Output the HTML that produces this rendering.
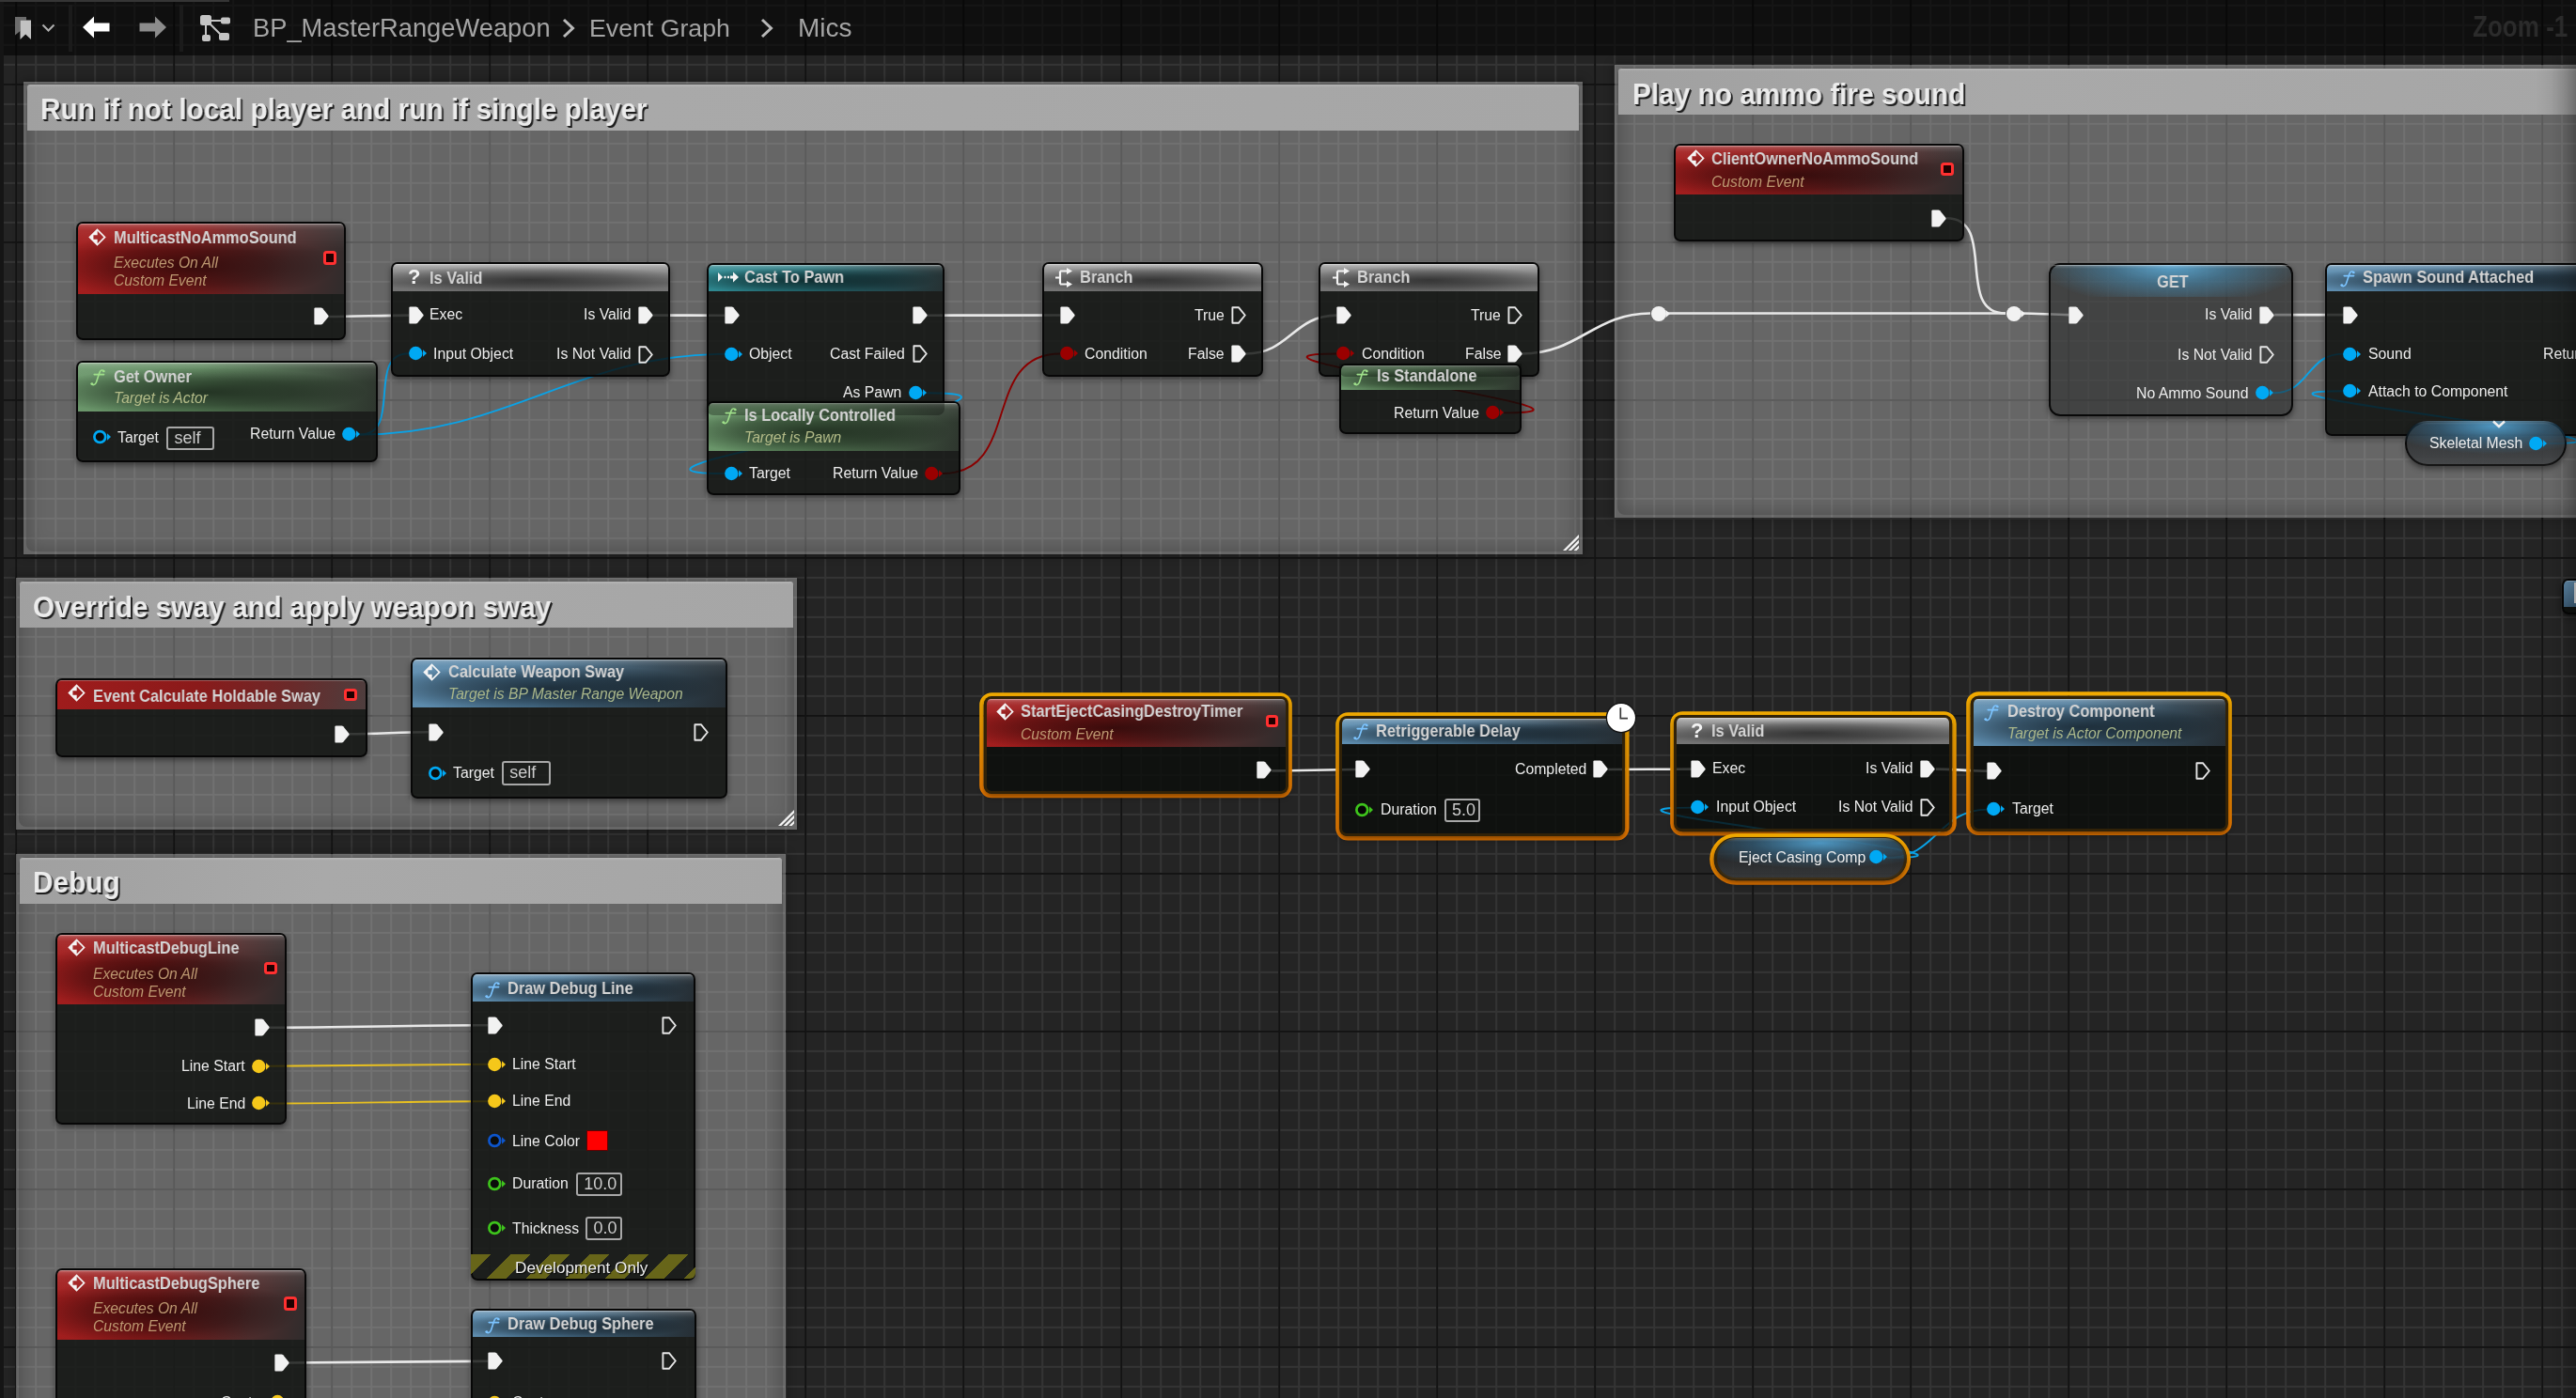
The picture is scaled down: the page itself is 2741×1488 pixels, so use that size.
<!DOCTYPE html>
<html><head><meta charset="utf-8"><title>BP_MasterRangeWeapon - Event Graph</title>
<style>
*{margin:0;padding:0;box-sizing:border-box}
html,body{width:2741px;height:1488px;overflow:hidden;position:relative}
body{font-family:"Liberation Sans",sans-serif;}

body{background-color:#242424;
background-image:
 linear-gradient(to right, #131313 0px, #131313 2px, transparent 2px),
 linear-gradient(to bottom, #131313 0px, #131313 2px, transparent 2px),
 linear-gradient(to right, #343434 0px, #343434 2px, transparent 2px),
 linear-gradient(to bottom, #343434 0px, #343434 2px, transparent 2px);
background-size: 168px 100%, 100% 168px, 21px 100%, 100% 21px;
background-position: 16.2px 0, 0 88.9px, 16.2px 0, 0 4.9px;
}

#tb{position:absolute;left:0;top:0;width:2741px;height:59px;background:rgba(0,0,0,0.58);z-index:50}
#tbline{position:absolute;left:0;top:0;width:244px;height:1.5px;background:#353535;z-index:56}
#rvig{position:absolute;right:0;top:59px;width:26px;height:1429px;background:linear-gradient(to left, rgba(0,0,0,0.2) 0px, rgba(0,0,0,0.08) 12px, rgba(0,0,0,0) 26px);z-index:48}
#lstrip{position:absolute;left:0;top:2px;width:3.5px;height:1486px;background:#151515;z-index:55}
.sep{position:absolute;top:5px;width:3.5px;height:50px;background:#1b1b1b;z-index:52}
.ico,.pin{position:absolute;display:block}
#tbwrap .ico{z-index:52}
.t{position:absolute;white-space:nowrap;line-height:1;will-change:transform}
#tbwrap .t,#tbwrap .ico,#tbwrap .sep{z-index:60}
.b{font-weight:bold}
.node .b{letter-spacing:0px}
.i{font-style:italic}
.bc{color:#a4a4a4;z-index:52}
.cmt{position:absolute;background:rgba(255,255,255,0.30);box-shadow:0 0 9px 2px rgba(0,0,0,0.28)}
.cin{position:absolute;left:3px;top:3px;right:3px;bottom:3px;border-radius:8px;box-shadow:inset 0 0 18px 3px rgba(0,0,0,0.22)}
.chdr{position:absolute;background:linear-gradient(180deg, rgba(255,255,255,0.18) 0px, rgba(255,255,255,0) 3px),linear-gradient(100deg,#a0a0a0 0%,#a9a9a9 40%,#a6a6a6 100%);border-radius:3px 3px 0 0}
.ctitle{color:#ececec;text-shadow:2px 2px 0 #1e1e1e, 1px 1px 0 #1e1e1e}
.wires{position:absolute;left:0;top:0}
.node{position:absolute;border:2px solid rgba(6,6,6,0.95);box-shadow:0 3px 6px rgba(0,0,0,0.45)}
.kids{position:absolute;left:-2px;top:-2px;right:-2px;bottom:-2px}
.hdr{position:absolute;left:0;top:0;right:0}
.hl{position:absolute;left:1px;top:0;right:1px;height:3px;border-top:1.5px solid rgba(255,255,255,0.28)}
.sel{position:absolute;overflow:visible}
.fico{font-family:"Liberation Serif",serif;font-style:italic;font-size:24px;line-height:1}
.qico{font-weight:bold;font-size:22px;color:#f4f4f4;line-height:1}
.vbox{position:absolute;border:2px solid #a8a8a8;color:#cccccc;overflow:hidden;padding-left:6px;white-space:nowrap;border-radius:3px;box-sizing:content-box}
.dsq{position:absolute;border:3px solid #ff3030;background:#200000;border-radius:3.5px;box-sizing:content-box}
.swatch{position:absolute;width:23px;height:22px;background:#ff0000;border:1px solid #600}
.dev{position:absolute;left:0;right:0;background:repeating-linear-gradient(135deg,#676519 0px,#676519 14.85px,rgba(0,0,0,0) 14.85px,rgba(0,0,0,0) 29.7px);border-radius:0 0 6px 6px}
.varhdr{position:absolute;left:0;top:0;right:0;bottom:0;background:linear-gradient(180deg, rgba(255,255,255,0.2) 0px, rgba(255,255,255,0) 4px),radial-gradient(ellipse 68% 62% at 55% 12%, rgba(85,170,220,0.85) 0%, rgba(60,130,175,0.45) 50%, rgba(0,0,0,0) 100%),linear-gradient(180deg, rgba(0,0,0,0.15) 0%, rgba(0,0,0,0.05) 50%, rgba(255,255,255,0.06) 100%)}
</style></head><body>
<div class="cmt" style="left:24.9px;top:86.5px;width:1659.1px;height:503.3px"><div class="cin"></div></div><div class="chdr" style="left:29px;top:89.9px;width:1651px;height:48.9px"></div><span class="t b ctitle" style="top:101.18px;font-size:31.8px;left:43px;transform:scaleX(0.937);transform-origin:0 0;">Run if not local player and run if single player</span><svg class="ico" style="left:1663px;top:569.1px" width="17" height="17" viewBox="0 0 17 17"><path d="M0,17 L17,0 L17,3.2 L3.2,17 Z M5.6,17 L17,5.6 L17,9 L9,17 Z M11.4,17 L17,11.4 L17,14.6 L14.6,17 Z" fill="#f4f4f4"/></svg><div class="cmt" style="left:1718px;top:69.1px;width:1034px;height:481.7px"><div class="cin"></div></div><div class="chdr" style="left:1722px;top:73.1px;width:1026px;height:48.6px"><div style="position:absolute;left:0;top:0;right:0;bottom:0;background:linear-gradient(to left, rgba(0,0,0,0.2) 0px, rgba(0,0,0,0.08) 25px, rgba(0,0,0,0) 50px)"></div></div><span class="t b ctitle" style="top:84.78px;font-size:31.8px;left:1736.8px;transform:scaleX(0.937);transform-origin:0 0;">Play no ammo fire sound</span><div class="cmt" style="left:16.7px;top:615.2px;width:831.3px;height:268.1px"><div class="cin"></div></div><div class="chdr" style="left:21px;top:619.3px;width:822.7px;height:48.5px"></div><span class="t b ctitle" style="top:630.58px;font-size:31.8px;left:35px;transform:scaleX(0.937);transform-origin:0 0;">Override sway and apply weapon sway</span><svg class="ico" style="left:827.5px;top:862px" width="17" height="17" viewBox="0 0 17 17"><path d="M0,17 L17,0 L17,3.2 L3.2,17 Z M5.6,17 L17,5.6 L17,9 L9,17 Z M11.4,17 L17,11.4 L17,14.6 L14.6,17 Z" fill="#f4f4f4"/></svg><div class="cmt" style="left:16.7px;top:909px;width:819px;height:691px"><div class="cin"></div></div><div class="chdr" style="left:21px;top:912.7px;width:811px;height:49.1px"></div><span class="t b ctitle" style="top:924.18px;font-size:31.8px;left:35px;transform:scaleX(0.937);transform-origin:0 0;">Debug</span>
<svg class="wires" width="2741" height="1488"><defs><linearGradient id="selg" x1="0" y1="0" x2="0" y2="1"><stop offset="0" stop-color="#f5ad00"/><stop offset="1" stop-color="#e97800"/></linearGradient></defs><path d="M350.2,337 C378.93,337 406.27,335.6 435,335.6" stroke="#e8e8e8" stroke-width="2.6" fill="none"/><path d="M382.9,462.5 C429.03,462.5 388.87,376.2 435,376.2" stroke="#0aa2e6" stroke-width="1.9" fill="none"/><path d="M382.9,462.5 C540.83,462.5 613.07,376.8 771,376.8" stroke="#0aa2e6" stroke-width="1.9" fill="none"/><path d="M695.2,335.6 C720.5,335.6 745.7,335.7 771,335.7" stroke="#e8e8e8" stroke-width="2.6" fill="none"/><path d="M986.9,335.7 C1034,335.7 1080.9,335.5 1128,335.5" stroke="#e8e8e8" stroke-width="2.6" fill="none"/><path d="M986.3,418.2 C1171.35,418.2 585.95,504 771,504" stroke="#0aa2e6" stroke-width="1.9" fill="none"/><path d="M1003,504 C1087.17,504 1043.83,376.5 1128,376.5" stroke="#8a0000" stroke-width="1.9" fill="none"/><path d="M1326,376.5 C1371.7,376.5 1376.5,335.6 1422.2,335.6" stroke="#e8e8e8" stroke-width="2.6" fill="none"/><path d="M1600.2,439.4 C1757.82,439.4 1264.58,376.5 1422.2,376.5" stroke="#8a0000" stroke-width="1.9" fill="none"/><path d="M1619.8,376.5 C1679.53,376.5 1696.27,333.5 1756,333.5" stroke="#e8e8e8" stroke-width="2.6" fill="none"/><path d="M1773,333.5 C1893.33,333.5 2013.67,333.5 2134,333.5" stroke="#e8e8e8" stroke-width="2.6" fill="none"/><path d="M2071.1,232.2 C2125.83,232.2 2079.27,333.5 2134,333.5" stroke="#e8e8e8" stroke-width="2.6" fill="none"/><path d="M2151,333.5 C2168.3,333.5 2184,335.1 2201.3,335.1" stroke="#e8e8e8" stroke-width="2.6" fill="none"/><path d="M2420.2,335.1 C2444.57,335.1 2468.93,335.1 2493.3,335.1" stroke="#e8e8e8" stroke-width="2.6" fill="none"/><path d="M2419.2,418.3 C2457.7,418.3 2454.5,376.6 2493,376.6" stroke="#0aa2e6" stroke-width="1.9" fill="none"/><path d="M2710.1,472 C2879.34,472 2323.76,416.3 2493,416.3" stroke="#0aa2e6" stroke-width="1.9" fill="none"/><path d="M371.6,781.3 C400.33,781.3 427.07,779.3 455.8,779.3" stroke="#e8e8e8" stroke-width="2.6" fill="none"/><path d="M287.1,1093.7 C365.27,1093.7 441.03,1091.3 519.2,1091.3" stroke="#e8e8e8" stroke-width="2.6" fill="none"/><path d="M287.1,1134.8 C365.13,1134.8 441.17,1132.8 519.2,1132.8" stroke="#e8c020" stroke-width="1.9" fill="none"/><path d="M287.1,1174.5 C365.23,1174.5 441.07,1172.2 519.2,1172.2" stroke="#e8c020" stroke-width="1.9" fill="none"/><path d="M308.1,1450.5 C379.03,1450.5 448.27,1448.8 519.2,1448.8" stroke="#e8e8e8" stroke-width="2.6" fill="none"/><path d="M1353.2,820.4 C1383.53,820.4 1412.47,819 1442.8,819" stroke="#e8e8e8" stroke-width="2.6" fill="none"/><path d="M1711.3,819 C1740.93,819 1770.17,818.6 1799.8,818.6" stroke="#e8e8e8" stroke-width="2.6" fill="none"/><path d="M2060,818.6 C2078.93,818.6 2095.87,820.6 2114.8,820.6" stroke="#e8e8e8" stroke-width="2.6" fill="none"/><path d="M2008.1,913 C2176.13,913 1631.96,859.6 1800,859.6" stroke="#0aa2e6" stroke-width="1.9" fill="none"/><path d="M2008.1,913 C2060.8,913 2062.1,861.6 2114.8,861.6" stroke="#0aa2e6" stroke-width="1.9" fill="none"/><path d="M307,1492.5 C377.73,1492.5 448.47,1492.5 519.2,1492.5" stroke="#e8c020" stroke-width="1.9" fill="none"/></svg>
<div class="node" style="left:80.6px;top:236.2px;width:287.9px;height:126.3px;border-radius:7px;background:rgba(10,13,10,0.80);border-width:2px;"><div class="hdr" style="height:74.6px;background:linear-gradient(180deg, rgba(255,255,255,0.28) 0px, rgba(255,255,255,0.08) 3px, rgba(255,255,255,0) 7px),linear-gradient(180deg, rgba(255,255,255,0.10) 0%, rgba(255,255,255,0) 40%),radial-gradient(ellipse 55% 50% at 42% 60%, rgba(0,0,0,0.6) 0%, rgba(0,0,0,0.35) 55%, rgba(0,0,0,0) 100%),linear-gradient(100deg, #a41e1e 0%, #901c1c 40%, #4e2c2c 78%, #302c2c 100%);border-radius:5px 5px 0 0"></div><div class="hl" style="border-radius:6px 6px 0 0"></div><div class="kids" style="left:-2px;top:-2px;right:auto;bottom:auto;width:287.9px;height:126.3px"><svg class="ico" style="left:13.2px;top:6.8px" width="19" height="19" viewBox="0 0 20 20"><path d="M10,0.3 L19.7,10 L10,19.7 L0.3,10 Z M10.2,3 L17.2,10 L10.2,17 L10.2,12.3 L5.7,12.3 L5.7,7.7 L10.2,7.7 Z" fill="#f4f4f4" fill-rule="evenodd" /></svg><span class="t b" style="top:7.39px;font-size:18.2px;color:#d4d4d4;left:40px;transform:scaleX(0.9);transform-origin:0 0;">MulticastNoAmmoSound</span><span class="t i" style="top:36.31px;font-size:15.7px;color:#bc9770;left:40px;">Executes On All</span><span class="t i" style="top:55.31px;font-size:15.7px;color:#bc9770;left:40px;">Custom Event</span><div class="dsq" style="left:263.4px;top:31.3px;width:8.2px;height:8.2px"></div><svg class="pin" style="left:253.6px;top:91.3px" width="16" height="19" viewBox="0 0 16 19"><path d="M1.6,0.4 L7.6,0.4 Q8.6,0.4 9.3,1.2 L15.4,8.7 Q16,9.5 15.4,10.3 L9.3,17.8 Q8.6,18.6 7.6,18.6 L1.6,18.6 Q0.4,18.6 0.4,17.4 L0.4,1.6 Q0.4,0.4 1.6,0.4 Z" fill="#f2f2f2"/></svg></div></div><div class="node" style="left:80.6px;top:384.3px;width:321.1px;height:108.2px;border-radius:7px;background:rgba(10,13,10,0.80);border-width:2px;"><div class="hdr" style="height:51.7px;background:linear-gradient(180deg, rgba(255,255,255,0.28) 0px, rgba(255,255,255,0.08) 3px, rgba(255,255,255,0) 7px),linear-gradient(180deg, rgba(255,255,255,0.10) 0%, rgba(255,255,255,0) 40%),radial-gradient(ellipse 55% 50% at 42% 60%, rgba(0,0,0,0.6) 0%, rgba(0,0,0,0.35) 55%, rgba(0,0,0,0) 100%),linear-gradient(100deg, #6c986c 0%, #5c865c 40%, #3e523e 78%, #2e362e 100%);border-radius:5px 5px 0 0"></div><div class="hl" style="border-radius:6px 6px 0 0"></div><div class="kids" style="left:-2px;top:-2px;right:auto;bottom:auto;width:321.1px;height:108.2px"><svg class="ico" style="left:15.6px;top:9px" width="16" height="18" viewBox="0 0 16 18"><path d="M14.6,2.2 C14,0.6 11.4,0.4 10.2,2.8 C9.2,5 7.4,11.5 6.3,14.2 C5.3,16.8 2.6,17.4 1.4,15.6 M4.2,5.6 H14.6" stroke="#9fe08a" stroke-width="1.6" fill="none" stroke-linecap="round"/><circle cx="14.3" cy="2" r="1.3" fill="#9fe08a"/><circle cx="1.8" cy="15.6" r="1.4" fill="#9fe08a"/></svg><span class="t b" style="top:7.39px;font-size:18.2px;color:#d4d4d4;left:40px;transform:scaleX(0.9);transform-origin:0 0;">Get Owner</span><span class="t i" style="top:32.01px;font-size:15.7px;color:#b3bb88;left:40px;">Target is Actor</span><svg class="pin" style="left:18.3px;top:72.2px" width="20" height="18" viewBox="0 0 20 18"><circle cx="7.3" cy="9" r="5.9" fill="rgba(0,0,0,0.6)" stroke="#00a9f4" stroke-width="2.7"/><path d="M15,5.2 L19,9 L15,12.8 Z" fill="#00a9f4"/></svg><span class="t " style="top:73.53px;font-size:15.8px;color:#ececec;left:44.8px;">Target</span><div class="vbox" style="left:96.8px;top:69.3px;width:41px;height:21px;font-size:18px;line-height:21px">self</div><span class="t " style="top:70.13px;font-size:15.8px;color:#ececec;right:44.7px;">Return Value</span><svg class="pin" style="left:283.3px;top:69.2px" width="20" height="18" viewBox="0 0 20 18"><circle cx="7.3" cy="9" r="7.2" fill="#00a9f4"/><path d="M15,5.2 L19,9 L15,12.8 Z" fill="#00a9f4"/></svg></div></div><div class="node" style="left:416.1px;top:279.1px;width:296.7px;height:122.1px;border-radius:7px;background:rgba(10,13,10,0.80);border-width:2px;"><div class="hdr" style="height:28.8px;background:linear-gradient(180deg, rgba(255,255,255,0.35) 0px, rgba(255,255,255,0.1) 3px, rgba(255,255,255,0) 7px),radial-gradient(ellipse 62% 50% at 50% 58%, rgba(0,0,0,0.55) 0%, rgba(0,0,0,0.3) 55%, rgba(0,0,0,0) 100%),linear-gradient(180deg, #a4a4a4 0%, #8a8a8a 35%, #6e6e6e 70%, #747474 100%);border-radius:5px 5px 0 0"></div><div class="hl" style="border-radius:6px 6px 0 0"></div><div class="kids" style="left:-2px;top:-2px;right:auto;bottom:auto;width:296.7px;height:122.1px"><span class="t qico" style="left:17.6px;top:4.9px">?</span><span class="t b" style="top:7.49px;font-size:18.2px;color:#d4d4d4;left:40.7px;transform:scaleX(0.9);transform-origin:0 0;">Is Valid</span><svg class="pin" style="left:18.9px;top:47px" width="16" height="19" viewBox="0 0 16 19"><path d="M1.6,0.4 L7.6,0.4 Q8.6,0.4 9.3,1.2 L15.4,8.7 Q16,9.5 15.4,10.3 L9.3,17.8 Q8.6,18.6 7.6,18.6 L1.6,18.6 Q0.4,18.6 0.4,17.4 L0.4,1.6 Q0.4,0.4 1.6,0.4 Z" fill="#f2f2f2"/></svg><span class="t " style="top:48.03px;font-size:15.8px;color:#ececec;left:41.3px;">Exec</span><span class="t " style="top:48.33px;font-size:15.8px;color:#ececec;right:41.5px;">Is Valid</span><svg class="pin" style="left:263.1px;top:47px" width="16" height="19" viewBox="0 0 16 19"><path d="M1.6,0.4 L7.6,0.4 Q8.6,0.4 9.3,1.2 L15.4,8.7 Q16,9.5 15.4,10.3 L9.3,17.8 Q8.6,18.6 7.6,18.6 L1.6,18.6 Q0.4,18.6 0.4,17.4 L0.4,1.6 Q0.4,0.4 1.6,0.4 Z" fill="#f2f2f2"/></svg><svg class="pin" style="left:18.9px;top:88.1px" width="20" height="18" viewBox="0 0 20 18"><circle cx="7.3" cy="9" r="7.2" fill="#00a9f4"/><path d="M15,5.2 L19,9 L15,12.8 Z" fill="#00a9f4"/></svg><span class="t " style="top:89.63px;font-size:15.8px;color:#ececec;left:45.3px;">Input Object</span><span class="t " style="top:90.03px;font-size:15.8px;color:#ececec;right:41.5px;">Is Not Valid</span><svg class="pin" style="left:263.1px;top:88.9px" width="16" height="19" viewBox="0 0 16 19"><path d="M1.4,1.2 L7.9,1.2 L14.8,9.5 L7.9,17.8 L1.4,17.8 Z" fill="none" stroke="#e6e6e6" stroke-width="1.9" stroke-linejoin="round"/></svg></div></div><div class="node" style="left:752.4px;top:279.6px;width:252.4px;height:161.4px;border-radius:7px;background:rgba(10,13,10,0.80);border-width:2px;"><div class="hdr" style="height:28.1px;background:linear-gradient(180deg, rgba(255,255,255,0.28) 0px, rgba(255,255,255,0.08) 3px, rgba(255,255,255,0) 7px),linear-gradient(180deg, rgba(255,255,255,0.10) 0%, rgba(255,255,255,0) 40%),radial-gradient(ellipse 55% 50% at 42% 60%, rgba(0,0,0,0.6) 0%, rgba(0,0,0,0.35) 55%, rgba(0,0,0,0) 100%),linear-gradient(100deg, #2f8a92 0%, #287880 40%, #23484e 78%, #263234 100%);border-radius:5px 5px 0 0"></div><div class="hl" style="border-radius:6px 6px 0 0"></div><div class="kids" style="left:-2px;top:-2px;right:auto;bottom:auto;width:252.4px;height:161.4px"><svg class="ico" style="left:12.1px;top:8.9px" width="22" height="14" viewBox="0 0 22 14"><path d="M0,2 L5,7 L0,12 Z" fill="#f4f4f4"/><rect x="6.5" y="5.8" width="2" height="2.4" fill="#f4f4f4"/><rect x="10" y="5.8" width="2" height="2.4" fill="#f4f4f4"/><path d="M13,5.5 H16 V1.5 L22,7 L16,12.5 V8.5 H13 Z" fill="#f4f4f4"/></svg><span class="t b" style="top:6.29px;font-size:18.2px;color:#d4d4d4;left:40.1px;transform:scaleX(0.9);transform-origin:0 0;">Cast To Pawn</span><svg class="pin" style="left:18.6px;top:46.6px" width="16" height="19" viewBox="0 0 16 19"><path d="M1.6,0.4 L7.6,0.4 Q8.6,0.4 9.3,1.2 L15.4,8.7 Q16,9.5 15.4,10.3 L9.3,17.8 Q8.6,18.6 7.6,18.6 L1.6,18.6 Q0.4,18.6 0.4,17.4 L0.4,1.6 Q0.4,0.4 1.6,0.4 Z" fill="#f2f2f2"/></svg><svg class="pin" style="left:218.5px;top:46.6px" width="16" height="19" viewBox="0 0 16 19"><path d="M1.6,0.4 L7.6,0.4 Q8.6,0.4 9.3,1.2 L15.4,8.7 Q16,9.5 15.4,10.3 L9.3,17.8 Q8.6,18.6 7.6,18.6 L1.6,18.6 Q0.4,18.6 0.4,17.4 L0.4,1.6 Q0.4,0.4 1.6,0.4 Z" fill="#f2f2f2"/></svg><svg class="pin" style="left:18.6px;top:88.2px" width="20" height="18" viewBox="0 0 20 18"><circle cx="7.3" cy="9" r="7.2" fill="#00a9f4"/><path d="M15,5.2 L19,9 L15,12.8 Z" fill="#00a9f4"/></svg><span class="t " style="top:89.43px;font-size:15.8px;color:#ececec;left:45.1px;">Object</span><span class="t " style="top:89.43px;font-size:15.8px;color:#ececec;right:41.5px;">Cast Failed</span><svg class="pin" style="left:218.6px;top:87.7px" width="16" height="19" viewBox="0 0 16 19"><path d="M1.4,1.2 L7.9,1.2 L14.8,9.5 L7.9,17.8 L1.4,17.8 Z" fill="none" stroke="#e6e6e6" stroke-width="1.9" stroke-linejoin="round"/></svg><span class="t " style="top:130.83px;font-size:15.8px;color:#ececec;right:45.5px;">As Pawn</span><svg class="pin" style="left:214.9px;top:129.6px" width="20" height="18" viewBox="0 0 20 18"><circle cx="7.3" cy="9" r="7.2" fill="#00a9f4"/><path d="M15,5.2 L19,9 L15,12.8 Z" fill="#00a9f4"/></svg></div></div><div class="node" style="left:752.4px;top:427.2px;width:269.6px;height:100.2px;border-radius:7px;background:rgba(10,13,10,0.80);border-width:2px;"><div class="hdr" style="height:50.7px;background:linear-gradient(180deg, rgba(255,255,255,0.28) 0px, rgba(255,255,255,0.08) 3px, rgba(255,255,255,0) 7px),linear-gradient(180deg, rgba(255,255,255,0.10) 0%, rgba(255,255,255,0) 40%),radial-gradient(ellipse 55% 50% at 42% 60%, rgba(0,0,0,0.6) 0%, rgba(0,0,0,0.35) 55%, rgba(0,0,0,0) 100%),linear-gradient(100deg, #6c986c 0%, #5c865c 40%, #3e523e 78%, #2e362e 100%);border-radius:5px 5px 0 0"></div><div class="hl" style="border-radius:6px 6px 0 0"></div><div class="kids" style="left:-2px;top:-2px;right:auto;bottom:auto;width:269.6px;height:100.2px"><div style="position:absolute;left:0px;top:0px;width:252.4px;height:14.6px;border-radius:0 0 7px 7px;background:rgba(5,8,5,0.32)"></div><svg class="ico" style="left:15.7px;top:7.3px" width="16" height="18" viewBox="0 0 16 18"><path d="M14.6,2.2 C14,0.6 11.4,0.4 10.2,2.8 C9.2,5 7.4,11.5 6.3,14.2 C5.3,16.8 2.6,17.4 1.4,15.6 M4.2,5.6 H14.6" stroke="#9fe08a" stroke-width="1.6" fill="none" stroke-linecap="round"/><circle cx="14.3" cy="2" r="1.3" fill="#9fe08a"/><circle cx="1.8" cy="15.6" r="1.4" fill="#9fe08a"/></svg><span class="t b" style="top:5.69px;font-size:18.2px;color:#d4d4d4;left:40.1px;transform:scaleX(0.9);transform-origin:0 0;">Is Locally Controlled</span><span class="t i" style="top:30.41px;font-size:15.7px;color:#b3bb88;left:40.1px;">Target is Pawn</span><svg class="pin" style="left:18.6px;top:67.8px" width="20" height="18" viewBox="0 0 20 18"><circle cx="7.3" cy="9" r="7.2" fill="#00a9f4"/><path d="M15,5.2 L19,9 L15,12.8 Z" fill="#00a9f4"/></svg><span class="t " style="top:69.03px;font-size:15.8px;color:#ececec;left:45.1px;">Target</span><span class="t " style="top:69.03px;font-size:15.8px;color:#ececec;right:45px;">Return Value</span><svg class="pin" style="left:231.6px;top:67.8px" width="20" height="18" viewBox="0 0 20 18"><circle cx="7.3" cy="9" r="7.2" fill="#9a0000"/><path d="M15,5.2 L19,9 L15,12.8 Z" fill="#9a0000"/></svg></div></div><div class="node" style="left:1109.1px;top:279.2px;width:234.7px;height:122.3px;border-radius:7px;background:rgba(10,13,10,0.80);border-width:2px;"><div class="hdr" style="height:28.8px;background:linear-gradient(180deg, rgba(255,255,255,0.35) 0px, rgba(255,255,255,0.1) 3px, rgba(255,255,255,0) 7px),radial-gradient(ellipse 62% 50% at 50% 58%, rgba(0,0,0,0.55) 0%, rgba(0,0,0,0.3) 55%, rgba(0,0,0,0) 100%),linear-gradient(180deg, #a4a4a4 0%, #8a8a8a 35%, #6e6e6e 70%, #747474 100%);border-radius:5px 5px 0 0"></div><div class="hl" style="border-radius:6px 6px 0 0"></div><div class="kids" style="left:-2px;top:-2px;right:auto;bottom:auto;width:234.7px;height:122.3px"><svg class="ico" style="left:14.4px;top:6.3px" width="19" height="21" viewBox="0 0 19 21"><path d="M0,10.5 H5 M5,3.5 V17.5 M5,3.5 H13 M5,17.5 H13" stroke="#f4f4f4" stroke-width="2.2" fill="none"/><path d="M12,0 L18,3.5 L12,7 Z M12,14 L18,17.5 L12,21 Z" fill="#f4f4f4"/></svg><span class="t b" style="top:7.29px;font-size:18.2px;color:#d4d4d4;left:40.4px;transform:scaleX(0.9);transform-origin:0 0;">Branch</span><svg class="pin" style="left:18.9px;top:46.8px" width="16" height="19" viewBox="0 0 16 19"><path d="M1.6,0.4 L7.6,0.4 Q8.6,0.4 9.3,1.2 L15.4,8.7 Q16,9.5 15.4,10.3 L9.3,17.8 Q8.6,18.6 7.6,18.6 L1.6,18.6 Q0.4,18.6 0.4,17.4 L0.4,1.6 Q0.4,0.4 1.6,0.4 Z" fill="#f2f2f2"/></svg><span class="t " style="top:48.53px;font-size:15.8px;color:#ececec;right:40.8px;">True</span><svg class="pin" style="left:200.9px;top:46.8px" width="16" height="19" viewBox="0 0 16 19"><path d="M1.4,1.2 L7.9,1.2 L14.8,9.5 L7.9,17.8 L1.4,17.8 Z" fill="none" stroke="#e6e6e6" stroke-width="1.9" stroke-linejoin="round"/></svg><svg class="pin" style="left:18.9px;top:88.3px" width="20" height="18" viewBox="0 0 20 18"><circle cx="7.3" cy="9" r="7.2" fill="#9a0000"/><path d="M15,5.2 L19,9 L15,12.8 Z" fill="#9a0000"/></svg><span class="t " style="top:89.53px;font-size:15.8px;color:#ececec;left:45.4px;">Condition</span><span class="t " style="top:89.53px;font-size:15.8px;color:#ececec;right:40.8px;">False</span><svg class="pin" style="left:200.9px;top:87.8px" width="16" height="19" viewBox="0 0 16 19"><path d="M1.6,0.4 L7.6,0.4 Q8.6,0.4 9.3,1.2 L15.4,8.7 Q16,9.5 15.4,10.3 L9.3,17.8 Q8.6,18.6 7.6,18.6 L1.6,18.6 Q0.4,18.6 0.4,17.4 L0.4,1.6 Q0.4,0.4 1.6,0.4 Z" fill="#f2f2f2"/></svg></div></div><div class="node" style="left:1403.3px;top:279.2px;width:234.7px;height:122.3px;border-radius:7px;background:rgba(10,13,10,0.80);border-width:2px;"><div class="hdr" style="height:28.8px;background:linear-gradient(180deg, rgba(255,255,255,0.35) 0px, rgba(255,255,255,0.1) 3px, rgba(255,255,255,0) 7px),radial-gradient(ellipse 62% 50% at 50% 58%, rgba(0,0,0,0.55) 0%, rgba(0,0,0,0.3) 55%, rgba(0,0,0,0) 100%),linear-gradient(180deg, #a4a4a4 0%, #8a8a8a 35%, #6e6e6e 70%, #747474 100%);border-radius:5px 5px 0 0"></div><div class="hl" style="border-radius:6px 6px 0 0"></div><div class="kids" style="left:-2px;top:-2px;right:auto;bottom:auto;width:234.7px;height:122.3px"><svg class="ico" style="left:14.4px;top:6.3px" width="19" height="21" viewBox="0 0 19 21"><path d="M0,10.5 H5 M5,3.5 V17.5 M5,3.5 H13 M5,17.5 H13" stroke="#f4f4f4" stroke-width="2.2" fill="none"/><path d="M12,0 L18,3.5 L12,7 Z M12,14 L18,17.5 L12,21 Z" fill="#f4f4f4"/></svg><span class="t b" style="top:7.29px;font-size:18.2px;color:#d4d4d4;left:40.4px;transform:scaleX(0.9);transform-origin:0 0;">Branch</span><svg class="pin" style="left:18.9px;top:46.8px" width="16" height="19" viewBox="0 0 16 19"><path d="M1.6,0.4 L7.6,0.4 Q8.6,0.4 9.3,1.2 L15.4,8.7 Q16,9.5 15.4,10.3 L9.3,17.8 Q8.6,18.6 7.6,18.6 L1.6,18.6 Q0.4,18.6 0.4,17.4 L0.4,1.6 Q0.4,0.4 1.6,0.4 Z" fill="#f2f2f2"/></svg><span class="t " style="top:48.53px;font-size:15.8px;color:#ececec;right:40.8px;">True</span><svg class="pin" style="left:200.9px;top:46.8px" width="16" height="19" viewBox="0 0 16 19"><path d="M1.4,1.2 L7.9,1.2 L14.8,9.5 L7.9,17.8 L1.4,17.8 Z" fill="none" stroke="#e6e6e6" stroke-width="1.9" stroke-linejoin="round"/></svg><svg class="pin" style="left:18.9px;top:88.3px" width="20" height="18" viewBox="0 0 20 18"><circle cx="7.3" cy="9" r="7.2" fill="#9a0000"/><path d="M15,5.2 L19,9 L15,12.8 Z" fill="#9a0000"/></svg><span class="t " style="top:89.53px;font-size:15.8px;color:#ececec;left:45.4px;">Condition</span><span class="t " style="top:89.53px;font-size:15.8px;color:#ececec;right:40.8px;">False</span><svg class="pin" style="left:200.9px;top:87.8px" width="16" height="19" viewBox="0 0 16 19"><path d="M1.6,0.4 L7.6,0.4 Q8.6,0.4 9.3,1.2 L15.4,8.7 Q16,9.5 15.4,10.3 L9.3,17.8 Q8.6,18.6 7.6,18.6 L1.6,18.6 Q0.4,18.6 0.4,17.4 L0.4,1.6 Q0.4,0.4 1.6,0.4 Z" fill="#f2f2f2"/></svg></div></div><div class="node" style="left:1424.5px;top:386.7px;width:194px;height:75.6px;border-radius:7px;background:rgba(10,13,10,0.80);border-width:2px;"><div class="hdr" style="height:26.3px;background:linear-gradient(180deg, rgba(255,255,255,0.28) 0px, rgba(255,255,255,0.08) 3px, rgba(255,255,255,0) 7px),linear-gradient(180deg, rgba(255,255,255,0.10) 0%, rgba(255,255,255,0) 40%),radial-gradient(ellipse 55% 50% at 42% 60%, rgba(0,0,0,0.6) 0%, rgba(0,0,0,0.35) 55%, rgba(0,0,0,0) 100%),linear-gradient(100deg, #6c986c 0%, #5c865c 40%, #3e523e 78%, #2e362e 100%);border-radius:5px 5px 0 0"></div><div class="hl" style="border-radius:6px 6px 0 0"></div><div class="kids" style="left:-2px;top:-2px;right:auto;bottom:auto;width:194px;height:75.6px"><div style="position:absolute;left:0px;top:0px;width:194px;height:14.8px;border-radius:0 0 7px 7px;background:rgba(5,8,5,0.32)"></div><svg class="ico" style="left:15.6px;top:5.9px" width="16" height="18" viewBox="0 0 16 18"><path d="M14.6,2.2 C14,0.6 11.4,0.4 10.2,2.8 C9.2,5 7.4,11.5 6.3,14.2 C5.3,16.8 2.6,17.4 1.4,15.6 M4.2,5.6 H14.6" stroke="#9fe08a" stroke-width="1.6" fill="none" stroke-linecap="round"/><circle cx="14.3" cy="2" r="1.3" fill="#9fe08a"/><circle cx="1.8" cy="15.6" r="1.4" fill="#9fe08a"/></svg><span class="t b" style="top:4.29px;font-size:18.2px;color:#d4d4d4;left:40px;transform:scaleX(0.9);transform-origin:0 0;">Is Standalone</span><span class="t " style="top:44.93px;font-size:15.8px;color:#ececec;right:44.6px;">Return Value</span><svg class="pin" style="left:156.7px;top:43.7px" width="20" height="18" viewBox="0 0 20 18"><circle cx="7.3" cy="9" r="7.2" fill="#9a0000"/><path d="M15,5.2 L19,9 L15,12.8 Z" fill="#9a0000"/></svg></div></div><div class="node" style="left:1781.3px;top:153.3px;width:308.3px;height:103.4px;border-radius:7px;background:rgba(10,13,10,0.80);border-width:2px;"><div class="hdr" style="height:51.7px;background:linear-gradient(180deg, rgba(255,255,255,0.28) 0px, rgba(255,255,255,0.08) 3px, rgba(255,255,255,0) 7px),linear-gradient(180deg, rgba(255,255,255,0.10) 0%, rgba(255,255,255,0) 40%),radial-gradient(ellipse 55% 50% at 42% 60%, rgba(0,0,0,0.6) 0%, rgba(0,0,0,0.35) 55%, rgba(0,0,0,0) 100%),linear-gradient(100deg, #a41e1e 0%, #901c1c 40%, #4e2c2c 78%, #302c2c 100%);border-radius:5px 5px 0 0"></div><div class="hl" style="border-radius:6px 6px 0 0"></div><div class="kids" style="left:-2px;top:-2px;right:auto;bottom:auto;width:308.3px;height:103.4px"><svg class="ico" style="left:13.7px;top:6.2px" width="19" height="19" viewBox="0 0 20 20"><path d="M10,0.3 L19.7,10 L10,19.7 L0.3,10 Z M10.2,3 L17.2,10 L10.2,17 L10.2,12.3 L5.7,12.3 L5.7,7.7 L10.2,7.7 Z" fill="#f4f4f4" fill-rule="evenodd" /></svg><span class="t b" style="top:7.19px;font-size:18.2px;color:#d4d4d4;left:40.2px;transform:scaleX(0.9);transform-origin:0 0;">ClientOwnerNoAmmoSound</span><span class="t i" style="top:32.31px;font-size:15.7px;color:#bc9770;left:40.2px;">Custom Event</span><div class="dsq" style="left:283.6px;top:20px;width:8.1px;height:7.7px"></div><svg class="pin" style="left:273.8px;top:69.4px" width="16" height="19" viewBox="0 0 16 19"><path d="M1.6,0.4 L7.6,0.4 Q8.6,0.4 9.3,1.2 L15.4,8.7 Q16,9.5 15.4,10.3 L9.3,17.8 Q8.6,18.6 7.6,18.6 L1.6,18.6 Q0.4,18.6 0.4,17.4 L0.4,1.6 Q0.4,0.4 1.6,0.4 Z" fill="#f2f2f2"/></svg></div></div><div class="node" style="left:2180.3px;top:279.8px;width:259.4px;height:163.3px;border-radius:12px;background:rgba(38,40,40,0.56);border-width:2px;"><div class="hdr" style="height:34.2px;background:linear-gradient(180deg, rgba(255,255,255,0.25) 0px, rgba(255,255,255,0) 4px), radial-gradient(ellipse 55% 130% at 50% 0%, rgba(95,175,220,0.9) 0%, rgba(70,140,180,0.6) 45%, rgba(50,100,130,0.0) 100%);border-radius:10px 10px 0 0"></div><div class="hl" style="border-radius:11px 11px 0 0"></div><div class="kids" style="left:-2px;top:-2px;right:auto;bottom:auto;width:259.4px;height:163.3px"><span class="t b" style="top:10.99px;font-size:18.2px;color:#d4d4d4;left:114.3px;transform:scaleX(0.9);transform-origin:0 0;">GET</span><svg class="pin" style="left:21px;top:45.8px" width="16" height="19" viewBox="0 0 16 19"><path d="M1.6,0.4 L7.6,0.4 Q8.6,0.4 9.3,1.2 L15.4,8.7 Q16,9.5 15.4,10.3 L9.3,17.8 Q8.6,18.6 7.6,18.6 L1.6,18.6 Q0.4,18.6 0.4,17.4 L0.4,1.6 Q0.4,0.4 1.6,0.4 Z" fill="#f2f2f2"/></svg><span class="t " style="top:47.53px;font-size:15.8px;color:#ececec;right:43.3px;">Is Valid</span><svg class="pin" style="left:223.9px;top:45.8px" width="16" height="19" viewBox="0 0 16 19"><path d="M1.6,0.4 L7.6,0.4 Q8.6,0.4 9.3,1.2 L15.4,8.7 Q16,9.5 15.4,10.3 L9.3,17.8 Q8.6,18.6 7.6,18.6 L1.6,18.6 Q0.4,18.6 0.4,17.4 L0.4,1.6 Q0.4,0.4 1.6,0.4 Z" fill="#f2f2f2"/></svg><span class="t " style="top:89.73px;font-size:15.8px;color:#ececec;right:43.3px;">Is Not Valid</span><svg class="pin" style="left:223.9px;top:88px" width="16" height="19" viewBox="0 0 16 19"><path d="M1.4,1.2 L7.9,1.2 L14.8,9.5 L7.9,17.8 L1.4,17.8 Z" fill="none" stroke="#e6e6e6" stroke-width="1.9" stroke-linejoin="round"/></svg><span class="t " style="top:130.73px;font-size:15.8px;color:#ececec;right:47.4px;">No Ammo Sound</span><svg class="pin" style="left:219.9px;top:129.5px" width="20" height="18" viewBox="0 0 20 18"><circle cx="7.3" cy="9" r="7.2" fill="#00a9f4"/><path d="M15,5.2 L19,9 L15,12.8 Z" fill="#00a9f4"/></svg></div></div><div class="node" style="left:2474.2px;top:279.8px;width:325.8px;height:184.3px;border-radius:7px;background:rgba(10,13,10,0.80);border-width:2px;"><div class="hdr" style="height:27.8px;background:linear-gradient(180deg, rgba(255,255,255,0.28) 0px, rgba(255,255,255,0.08) 3px, rgba(255,255,255,0) 7px),linear-gradient(180deg, rgba(255,255,255,0.10) 0%, rgba(255,255,255,0) 40%),radial-gradient(ellipse 55% 50% at 42% 60%, rgba(0,0,0,0.6) 0%, rgba(0,0,0,0.35) 55%, rgba(0,0,0,0) 100%),linear-gradient(100deg, #5f8eb0 0%, #4e7a9a 40%, #2e4250 78%, #262e34 100%);border-radius:5px 5px 0 0"></div><div class="hl" style="border-radius:6px 6px 0 0"></div><div class="kids" style="left:-2px;top:-2px;right:auto;bottom:auto;width:325.8px;height:184.3px"><svg class="ico" style="left:15.9px;top:8.1px" width="16" height="18" viewBox="0 0 16 18"><path d="M14.6,2.2 C14,0.6 11.4,0.4 10.2,2.8 C9.2,5 7.4,11.5 6.3,14.2 C5.3,16.8 2.6,17.4 1.4,15.6 M4.2,5.6 H14.6" stroke="#7cc4ff" stroke-width="1.6" fill="none" stroke-linecap="round"/><circle cx="14.3" cy="2" r="1.3" fill="#7cc4ff"/><circle cx="1.8" cy="15.6" r="1.4" fill="#7cc4ff"/></svg><span class="t b" style="top:6.49px;font-size:18.2px;color:#d4d4d4;left:40.3px;transform:scaleX(0.9);transform-origin:0 0;">Spawn Sound Attached</span><svg class="pin" style="left:19.1px;top:45.8px" width="16" height="19" viewBox="0 0 16 19"><path d="M1.6,0.4 L7.6,0.4 Q8.6,0.4 9.3,1.2 L15.4,8.7 Q16,9.5 15.4,10.3 L9.3,17.8 Q8.6,18.6 7.6,18.6 L1.6,18.6 Q0.4,18.6 0.4,17.4 L0.4,1.6 Q0.4,0.4 1.6,0.4 Z" fill="#f2f2f2"/></svg><svg class="pin" style="left:18.8px;top:87.8px" width="20" height="18" viewBox="0 0 20 18"><circle cx="7.3" cy="9" r="7.2" fill="#00a9f4"/><path d="M15,5.2 L19,9 L15,12.8 Z" fill="#00a9f4"/></svg><span class="t " style="top:89.03px;font-size:15.8px;color:#ececec;left:45.5px;">Sound</span><span class="t " style="top:89.03px;font-size:15.8px;color:#ececec;left:232px;">Return Value</span><svg class="pin" style="left:18.8px;top:127.5px" width="20" height="18" viewBox="0 0 20 18"><circle cx="7.3" cy="9" r="7.2" fill="#00a9f4"/><path d="M15,5.2 L19,9 L15,12.8 Z" fill="#00a9f4"/></svg><span class="t " style="top:128.73px;font-size:15.8px;color:#ececec;left:45.5px;">Attach to Component</span></div></div><div class="node" style="left:2558.7px;top:448.3px;width:171.9px;height:47.4px;border-radius:24px;background:rgba(52,55,57,0.88);border-width:2px;"><div class="kids" style="left:-2px;top:-2px;right:auto;bottom:auto;width:171.9px;height:47.4px"><div class="varhdr" style="border-radius:24px"></div><svg class="ico" style="left:93.8px;top:-1.3px" width="14" height="9" viewBox="0 0 14 9"><path d="M1,1.5 L7,7 L13,1.5" stroke="#f0f0f0" stroke-width="2.4" fill="none"/></svg><span class="t " style="top:15.93px;font-size:15.8px;color:#ececec;left:26.4px;">Skeletal Mesh</span><svg class="pin" style="left:132.4px;top:14.7px" width="20" height="18" viewBox="0 0 20 18"><circle cx="7.3" cy="9" r="7.2" fill="#00a9f4"/><path d="M15,5.2 L19,9 L15,12.8 Z" fill="#00a9f4"/></svg></div></div><div class="node" style="left:59.4px;top:721.9px;width:331.2px;height:84.5px;border-radius:7px;background:rgba(10,13,10,0.80);border-width:2px;"><div class="hdr" style="height:30.7px;background:linear-gradient(100deg, #a01c1c 0%, #8a1a1a 45%, #6a2a2a 75%, #4d3e3e 100%);border-radius:5px 5px 0 0"></div><div class="hl" style="border-radius:6px 6px 0 0"></div><div class="kids" style="left:-2px;top:-2px;right:auto;bottom:auto;width:331.2px;height:84.5px"><svg class="ico" style="left:13.1px;top:6.6px" width="19" height="19" viewBox="0 0 20 20"><path d="M10,0.3 L19.7,10 L10,19.7 L0.3,10 Z M10.2,3 L17.2,10 L10.2,17 L10.2,12.3 L5.7,12.3 L5.7,7.7 L10.2,7.7 Z" fill="#f4f4f4" fill-rule="evenodd" /></svg><span class="t b" style="top:9.69px;font-size:18.2px;color:#d4d4d4;left:39.8px;transform:scaleX(0.9);transform-origin:0 0;">Event Calculate Holdable Sway</span><div class="dsq" style="left:306.9px;top:11.1px;width:7.7px;height:7.5px"></div><svg class="pin" style="left:296.2px;top:49.9px" width="16" height="19" viewBox="0 0 16 19"><path d="M1.6,0.4 L7.6,0.4 Q8.6,0.4 9.3,1.2 L15.4,8.7 Q16,9.5 15.4,10.3 L9.3,17.8 Q8.6,18.6 7.6,18.6 L1.6,18.6 Q0.4,18.6 0.4,17.4 L0.4,1.6 Q0.4,0.4 1.6,0.4 Z" fill="#f2f2f2"/></svg></div></div><div class="node" style="left:437.4px;top:700.2px;width:336.6px;height:149.6px;border-radius:7px;background:rgba(10,13,10,0.80);border-width:2px;"><div class="hdr" style="height:50.8px;background:linear-gradient(180deg, rgba(255,255,255,0.28) 0px, rgba(255,255,255,0.08) 3px, rgba(255,255,255,0) 7px),linear-gradient(180deg, rgba(255,255,255,0.10) 0%, rgba(255,255,255,0) 40%),radial-gradient(ellipse 55% 50% at 42% 60%, rgba(0,0,0,0.6) 0%, rgba(0,0,0,0.35) 55%, rgba(0,0,0,0) 100%),linear-gradient(100deg, #5f8eb0 0%, #4e7a9a 40%, #2e4250 78%, #262e34 100%);border-radius:5px 5px 0 0"></div><div class="hl" style="border-radius:6px 6px 0 0"></div><div class="kids" style="left:-2px;top:-2px;right:auto;bottom:auto;width:336.6px;height:149.6px"><svg class="ico" style="left:13.1px;top:6.3px" width="19" height="19" viewBox="0 0 20 20"><path d="M10,0.3 L19.7,10 L10,19.7 L0.3,10 Z M10.2,3 L17.2,10 L10.2,17 L10.2,12.3 L5.7,12.3 L5.7,7.7 L10.2,7.7 Z" fill="#f4f4f4" fill-rule="evenodd" /></svg><span class="t b" style="top:6.29px;font-size:18.2px;color:#d4d4d4;left:40.1px;transform:scaleX(0.9);transform-origin:0 0;">Calculate Weapon Sway</span><span class="t i" style="top:31.11px;font-size:15.7px;color:#a9b68a;left:40.1px;">Target is BP Master Range Weapon</span><svg class="pin" style="left:18.4px;top:69.6px" width="16" height="19" viewBox="0 0 16 19"><path d="M1.6,0.4 L7.6,0.4 Q8.6,0.4 9.3,1.2 L15.4,8.7 Q16,9.5 15.4,10.3 L9.3,17.8 Q8.6,18.6 7.6,18.6 L1.6,18.6 Q0.4,18.6 0.4,17.4 L0.4,1.6 Q0.4,0.4 1.6,0.4 Z" fill="#f2f2f2"/></svg><svg class="pin" style="left:301.1px;top:69.6px" width="16" height="19" viewBox="0 0 16 19"><path d="M1.4,1.2 L7.9,1.2 L14.8,9.5 L7.9,17.8 L1.4,17.8 Z" fill="none" stroke="#e6e6e6" stroke-width="1.9" stroke-linejoin="round"/></svg><svg class="pin" style="left:18.4px;top:113.5px" width="20" height="18" viewBox="0 0 20 18"><circle cx="7.3" cy="9" r="5.9" fill="rgba(0,0,0,0.6)" stroke="#00a9f4" stroke-width="2.7"/><path d="M15,5.2 L19,9 L15,12.8 Z" fill="#00a9f4"/></svg><span class="t " style="top:114.73px;font-size:15.8px;color:#ececec;left:45.1px;">Target</span><div class="vbox" style="left:96.8px;top:110.2px;width:41.8px;height:21.7px;font-size:18px;line-height:21.7px">self</div></div></div><div class="node" style="left:59.4px;top:992.9px;width:246.1px;height:204.5px;border-radius:7px;background:rgba(10,13,10,0.80);border-width:2px;"><div class="hdr" style="height:73.7px;background:linear-gradient(180deg, rgba(255,255,255,0.28) 0px, rgba(255,255,255,0.08) 3px, rgba(255,255,255,0) 7px),linear-gradient(180deg, rgba(255,255,255,0.10) 0%, rgba(255,255,255,0) 40%),radial-gradient(ellipse 55% 50% at 42% 60%, rgba(0,0,0,0.6) 0%, rgba(0,0,0,0.35) 55%, rgba(0,0,0,0) 100%),linear-gradient(100deg, #a41e1e 0%, #901c1c 40%, #4e2c2c 78%, #302c2c 100%);border-radius:5px 5px 0 0"></div><div class="hl" style="border-radius:6px 6px 0 0"></div><div class="kids" style="left:-2px;top:-2px;right:auto;bottom:auto;width:246.1px;height:204.5px"><svg class="ico" style="left:13.1px;top:6.6px" width="19" height="19" viewBox="0 0 20 20"><path d="M10,0.3 L19.7,10 L10,19.7 L0.3,10 Z M10.2,3 L17.2,10 L10.2,17 L10.2,12.3 L5.7,12.3 L5.7,7.7 L10.2,7.7 Z" fill="#f4f4f4" fill-rule="evenodd" /></svg><span class="t b" style="top:6.89px;font-size:18.2px;color:#d4d4d4;left:39.8px;transform:scaleX(0.9);transform-origin:0 0;">MulticastDebugLine</span><span class="t i" style="top:35.71px;font-size:15.7px;color:#bc9770;left:39.8px;">Executes On All</span><span class="t i" style="top:54.81px;font-size:15.7px;color:#bc9770;left:39.8px;">Custom Event</span><div class="dsq" style="left:222.1px;top:30.7px;width:7.3px;height:7.3px"></div><svg class="pin" style="left:211.7px;top:91.3px" width="16" height="19" viewBox="0 0 16 19"><path d="M1.6,0.4 L7.6,0.4 Q8.6,0.4 9.3,1.2 L15.4,8.7 Q16,9.5 15.4,10.3 L9.3,17.8 Q8.6,18.6 7.6,18.6 L1.6,18.6 Q0.4,18.6 0.4,17.4 L0.4,1.6 Q0.4,0.4 1.6,0.4 Z" fill="#f2f2f2"/></svg><span class="t " style="top:134.13px;font-size:15.8px;color:#ececec;right:44.4px;">Line Start</span><svg class="pin" style="left:208.7px;top:132.9px" width="20" height="18" viewBox="0 0 20 18"><circle cx="7.3" cy="9" r="7.2" fill="#f5c71a"/><path d="M15,5.2 L19,9 L15,12.8 Z" fill="#f5c71a"/></svg><span class="t " style="top:173.83px;font-size:15.8px;color:#ececec;right:44.4px;">Line End</span><svg class="pin" style="left:208.7px;top:172.6px" width="20" height="18" viewBox="0 0 20 18"><circle cx="7.3" cy="9" r="7.2" fill="#f5c71a"/><path d="M15,5.2 L19,9 L15,12.8 Z" fill="#f5c71a"/></svg></div></div><div class="node" style="left:500.8px;top:1035.3px;width:238.8px;height:327.7px;border-radius:7px;background:rgba(10,13,10,0.80);border-width:2px;"><div class="hdr" style="height:28.7px;background:linear-gradient(180deg, rgba(255,255,255,0.28) 0px, rgba(255,255,255,0.08) 3px, rgba(255,255,255,0) 7px),linear-gradient(180deg, rgba(255,255,255,0.10) 0%, rgba(255,255,255,0) 40%),radial-gradient(ellipse 55% 50% at 42% 60%, rgba(0,0,0,0.6) 0%, rgba(0,0,0,0.35) 55%, rgba(0,0,0,0) 100%),linear-gradient(100deg, #5f8eb0 0%, #4e7a9a 40%, #2e4250 78%, #262e34 100%);border-radius:5px 5px 0 0"></div><div class="hl" style="border-radius:6px 6px 0 0"></div><div class="kids" style="left:-2px;top:-2px;right:auto;bottom:auto;width:238.8px;height:327.7px"><svg class="ico" style="left:15px;top:9.5px" width="16" height="18" viewBox="0 0 16 18"><path d="M14.6,2.2 C14,0.6 11.4,0.4 10.2,2.8 C9.2,5 7.4,11.5 6.3,14.2 C5.3,16.8 2.6,17.4 1.4,15.6 M4.2,5.6 H14.6" stroke="#7cc4ff" stroke-width="1.6" fill="none" stroke-linecap="round"/><circle cx="14.3" cy="2" r="1.3" fill="#7cc4ff"/><circle cx="1.8" cy="15.6" r="1.4" fill="#7cc4ff"/></svg><span class="t b" style="top:7.89px;font-size:18.2px;color:#d4d4d4;left:39.4px;transform:scaleX(0.9);transform-origin:0 0;">Draw Debug Line</span><svg class="pin" style="left:18.4px;top:46.5px" width="16" height="19" viewBox="0 0 16 19"><path d="M1.6,0.4 L7.6,0.4 Q8.6,0.4 9.3,1.2 L15.4,8.7 Q16,9.5 15.4,10.3 L9.3,17.8 Q8.6,18.6 7.6,18.6 L1.6,18.6 Q0.4,18.6 0.4,17.4 L0.4,1.6 Q0.4,0.4 1.6,0.4 Z" fill="#f2f2f2"/></svg><svg class="pin" style="left:203.7px;top:46.5px" width="16" height="19" viewBox="0 0 16 19"><path d="M1.4,1.2 L7.9,1.2 L14.8,9.5 L7.9,17.8 L1.4,17.8 Z" fill="none" stroke="#e6e6e6" stroke-width="1.9" stroke-linejoin="round"/></svg><svg class="pin" style="left:18.4px;top:88.5px" width="20" height="18" viewBox="0 0 20 18"><circle cx="7.3" cy="9" r="7.2" fill="#f5c71a"/><path d="M15,5.2 L19,9 L15,12.8 Z" fill="#f5c71a"/></svg><span class="t " style="top:89.73px;font-size:15.8px;color:#ececec;left:44.4px;">Line Start</span><svg class="pin" style="left:18.4px;top:127.9px" width="20" height="18" viewBox="0 0 20 18"><circle cx="7.3" cy="9" r="7.2" fill="#f5c71a"/><path d="M15,5.2 L19,9 L15,12.8 Z" fill="#f5c71a"/></svg><span class="t " style="top:129.13px;font-size:15.8px;color:#ececec;left:44.4px;">Line End</span><svg class="pin" style="left:18.4px;top:170.1px" width="20" height="18" viewBox="0 0 20 18"><circle cx="7.3" cy="9" r="5.9" fill="rgba(0,0,0,0.6)" stroke="#0d55cc" stroke-width="2.7"/><path d="M15,5.2 L19,9 L15,12.8 Z" fill="#0d55cc"/></svg><span class="t " style="top:171.33px;font-size:15.8px;color:#ececec;left:44.4px;">Line Color</span><div class="swatch" style="left:122.9px;top:168.1px"></div><svg class="pin" style="left:18.4px;top:215.8px" width="20" height="18" viewBox="0 0 20 18"><circle cx="7.3" cy="9" r="5.9" fill="rgba(0,0,0,0.6)" stroke="#3ec41c" stroke-width="2.7"/><path d="M15,5.2 L19,9 L15,12.8 Z" fill="#3ec41c"/></svg><span class="t " style="top:217.03px;font-size:15.8px;color:#ececec;left:44.4px;">Duration</span><div class="vbox" style="left:112.5px;top:212.5px;width:38.5px;height:21.7px;font-size:18px;line-height:21.7px">10.0</div><svg class="pin" style="left:18.4px;top:263.2px" width="20" height="18" viewBox="0 0 20 18"><circle cx="7.3" cy="9" r="5.9" fill="rgba(0,0,0,0.6)" stroke="#3ec41c" stroke-width="2.7"/><path d="M15,5.2 L19,9 L15,12.8 Z" fill="#3ec41c"/></svg><span class="t " style="top:264.43px;font-size:15.8px;color:#ececec;left:44.4px;">Thickness</span><div class="vbox" style="left:122.6px;top:259.9px;width:28.4px;height:21px;font-size:18px;line-height:21px">0.0</div><div class="dev" style="top:299.7px;height:26px"></div><span class="t " style="top:305.44px;font-size:17.2px;color:#f0f0f0;left:46.8px;text-shadow:1px 1px 1px #000;">Development Only</span></div></div><div class="node" style="left:59.4px;top:1350.3px;width:267.1px;height:179.7px;border-radius:7px;background:rgba(10,13,10,0.80);border-width:2px;"><div class="hdr" style="height:73.7px;background:linear-gradient(180deg, rgba(255,255,255,0.28) 0px, rgba(255,255,255,0.08) 3px, rgba(255,255,255,0) 7px),linear-gradient(180deg, rgba(255,255,255,0.10) 0%, rgba(255,255,255,0) 40%),radial-gradient(ellipse 55% 50% at 42% 60%, rgba(0,0,0,0.6) 0%, rgba(0,0,0,0.35) 55%, rgba(0,0,0,0) 100%),linear-gradient(100deg, #a41e1e 0%, #901c1c 40%, #4e2c2c 78%, #302c2c 100%);border-radius:5px 5px 0 0"></div><div class="hl" style="border-radius:6px 6px 0 0"></div><div class="kids" style="left:-2px;top:-2px;right:auto;bottom:auto;width:267.1px;height:179.7px"><svg class="ico" style="left:13.1px;top:6.2px" width="19" height="19" viewBox="0 0 20 20"><path d="M10,0.3 L19.7,10 L10,19.7 L0.3,10 Z M10.2,3 L17.2,10 L10.2,17 L10.2,12.3 L5.7,12.3 L5.7,7.7 L10.2,7.7 Z" fill="#f4f4f4" fill-rule="evenodd" /></svg><span class="t b" style="top:6.29px;font-size:18.2px;color:#d4d4d4;left:39.8px;transform:scaleX(0.9);transform-origin:0 0;">MulticastDebugSphere</span><span class="t i" style="top:35.11px;font-size:15.7px;color:#bc9770;left:39.8px;">Executes On All</span><span class="t i" style="top:54.11px;font-size:15.7px;color:#bc9770;left:39.8px;">Custom Event</span><div class="dsq" style="left:242.8px;top:30px;width:7.7px;height:8.4px"></div><svg class="pin" style="left:232.7px;top:90.7px" width="16" height="19" viewBox="0 0 16 19"><path d="M1.6,0.4 L7.6,0.4 Q8.6,0.4 9.3,1.2 L15.4,8.7 Q16,9.5 15.4,10.3 L9.3,17.8 Q8.6,18.6 7.6,18.6 L1.6,18.6 Q0.4,18.6 0.4,17.4 L0.4,1.6 Q0.4,0.4 1.6,0.4 Z" fill="#f2f2f2"/></svg><span class="t " style="top:134.33px;font-size:15.8px;color:#ececec;right:44.5px;">Center</span><svg class="pin" style="left:228.6px;top:133.2px" width="20" height="18" viewBox="0 0 20 18"><circle cx="7.3" cy="9" r="7.2" fill="#f5c71a"/><path d="M15,5.2 L19,9 L15,12.8 Z" fill="#f5c71a"/></svg></div></div><div class="node" style="left:500.8px;top:1393px;width:239.8px;height:137px;border-radius:7px;background:rgba(10,13,10,0.80);border-width:2px;"><div class="hdr" style="height:28px;background:linear-gradient(180deg, rgba(255,255,255,0.28) 0px, rgba(255,255,255,0.08) 3px, rgba(255,255,255,0) 7px),linear-gradient(180deg, rgba(255,255,255,0.10) 0%, rgba(255,255,255,0) 40%),radial-gradient(ellipse 55% 50% at 42% 60%, rgba(0,0,0,0.6) 0%, rgba(0,0,0,0.35) 55%, rgba(0,0,0,0) 100%),linear-gradient(100deg, #5f8eb0 0%, #4e7a9a 40%, #2e4250 78%, #262e34 100%);border-radius:5px 5px 0 0"></div><div class="hl" style="border-radius:6px 6px 0 0"></div><div class="kids" style="left:-2px;top:-2px;right:auto;bottom:auto;width:239.8px;height:137px"><svg class="ico" style="left:15px;top:8.6px" width="16" height="18" viewBox="0 0 16 18"><path d="M14.6,2.2 C14,0.6 11.4,0.4 10.2,2.8 C9.2,5 7.4,11.5 6.3,14.2 C5.3,16.8 2.6,17.4 1.4,15.6 M4.2,5.6 H14.6" stroke="#7cc4ff" stroke-width="1.6" fill="none" stroke-linecap="round"/><circle cx="14.3" cy="2" r="1.3" fill="#7cc4ff"/><circle cx="1.8" cy="15.6" r="1.4" fill="#7cc4ff"/></svg><span class="t b" style="top:6.99px;font-size:18.2px;color:#d4d4d4;left:39.4px;transform:scaleX(0.9);transform-origin:0 0;">Draw Debug Sphere</span><svg class="pin" style="left:18.4px;top:46.3px" width="16" height="19" viewBox="0 0 16 19"><path d="M1.6,0.4 L7.6,0.4 Q8.6,0.4 9.3,1.2 L15.4,8.7 Q16,9.5 15.4,10.3 L9.3,17.8 Q8.6,18.6 7.6,18.6 L1.6,18.6 Q0.4,18.6 0.4,17.4 L0.4,1.6 Q0.4,0.4 1.6,0.4 Z" fill="#f2f2f2"/></svg><svg class="pin" style="left:203.7px;top:46.3px" width="16" height="19" viewBox="0 0 16 19"><path d="M1.4,1.2 L7.9,1.2 L14.8,9.5 L7.9,17.8 L1.4,17.8 Z" fill="none" stroke="#e6e6e6" stroke-width="1.9" stroke-linejoin="round"/></svg><svg class="pin" style="left:18.4px;top:90.5px" width="20" height="18" viewBox="0 0 20 18"><circle cx="7.3" cy="9" r="7.2" fill="#f5c71a"/><path d="M15,5.2 L19,9 L15,12.8 Z" fill="#f5c71a"/></svg><span class="t " style="top:91.63px;font-size:15.8px;color:#ececec;left:44.4px;">Center</span></div></div><svg class="sel" style="left:1042px;top:736.7px" width="333" height="112.5"><rect x="2.4" y="2.4" width="328.2" height="107.7" rx="11" fill="none" stroke="url(#selg)" stroke-width="4.4"/></svg><div class="node" style="left:1046.5px;top:741.2px;width:324px;height:103.5px;border-radius:8px;background:rgba(10,13,10,0.80);border-width:3.5px;border-color:rgba(52,36,8,0.95);"><div class="hdr" style="height:50.4px;background:linear-gradient(180deg, rgba(255,255,255,0.28) 0px, rgba(255,255,255,0.08) 3px, rgba(255,255,255,0) 7px),linear-gradient(180deg, rgba(255,255,255,0.10) 0%, rgba(255,255,255,0) 40%),radial-gradient(ellipse 55% 50% at 42% 60%, rgba(0,0,0,0.6) 0%, rgba(0,0,0,0.35) 55%, rgba(0,0,0,0) 100%),linear-gradient(100deg, #a41e1e 0%, #901c1c 40%, #4e2c2c 78%, #302c2c 100%);border-radius:5px 5px 0 0"></div><div class="hl" style="border-radius:6px 6px 0 0"></div><div class="kids" style="left:-2px;top:-2px;right:auto;bottom:auto;width:322px;height:101px"><svg class="ico" style="left:12.5px;top:6.3px" width="19" height="19" viewBox="0 0 20 20"><path d="M10,0.3 L19.7,10 L10,19.7 L0.3,10 Z M10.2,3 L17.2,10 L10.2,17 L10.2,12.3 L5.7,12.3 L5.7,7.7 L10.2,7.7 Z" fill="#f4f4f4" fill-rule="evenodd" /></svg><span class="t b" style="top:6.19px;font-size:18.2px;color:#d4d4d4;left:38.2px;transform:scaleX(0.9);transform-origin:0 0;">StartEjectCasingDestroyTimer</span><span class="t i" style="top:31.51px;font-size:15.7px;color:#bc9770;left:38.2px;">Custom Event</span><div class="dsq" style="left:299.3px;top:18.9px;width:7.7px;height:7.3px"></div><svg class="pin" style="left:289.2px;top:68.2px" width="16" height="19" viewBox="0 0 16 19"><path d="M1.6,0.4 L7.6,0.4 Q8.6,0.4 9.3,1.2 L15.4,8.7 Q16,9.5 15.4,10.3 L9.3,17.8 Q8.6,18.6 7.6,18.6 L1.6,18.6 Q0.4,18.6 0.4,17.4 L0.4,1.6 Q0.4,0.4 1.6,0.4 Z" fill="#f2f2f2"/></svg></div></div><svg class="sel" style="left:1420.5px;top:757.7px" width="312.7" height="136.7"><rect x="2.4" y="2.4" width="307.9" height="131.9" rx="11" fill="none" stroke="url(#selg)" stroke-width="4.4"/></svg><div class="node" style="left:1425px;top:762.2px;width:303.7px;height:127.7px;border-radius:8px;background:rgba(10,13,10,0.80);border-width:3.5px;border-color:rgba(52,36,8,0.95);"><div class="hdr" style="height:26.5px;background:linear-gradient(180deg, rgba(255,255,255,0.28) 0px, rgba(255,255,255,0.08) 3px, rgba(255,255,255,0) 7px),linear-gradient(180deg, rgba(255,255,255,0.10) 0%, rgba(255,255,255,0) 40%),radial-gradient(ellipse 55% 50% at 42% 60%, rgba(0,0,0,0.6) 0%, rgba(0,0,0,0.35) 55%, rgba(0,0,0,0) 100%),linear-gradient(100deg, #5f8eb0 0%, #4e7a9a 40%, #2e4250 78%, #262e34 100%);border-radius:5px 5px 0 0"></div><div class="hl" style="border-radius:6px 6px 0 0"></div><div class="kids" style="left:-2px;top:-2px;right:auto;bottom:auto;width:301.7px;height:125.2px"><svg class="ico" style="left:13.5px;top:7.1px" width="16" height="18" viewBox="0 0 16 18"><path d="M14.6,2.2 C14,0.6 11.4,0.4 10.2,2.8 C9.2,5 7.4,11.5 6.3,14.2 C5.3,16.8 2.6,17.4 1.4,15.6 M4.2,5.6 H14.6" stroke="#7cc4ff" stroke-width="1.6" fill="none" stroke-linecap="round"/><circle cx="14.3" cy="2" r="1.3" fill="#7cc4ff"/><circle cx="1.8" cy="15.6" r="1.4" fill="#7cc4ff"/></svg><span class="t b" style="top:5.49px;font-size:18.2px;color:#d4d4d4;left:37.9px;transform:scaleX(0.9);transform-origin:0 0;">Retriggerable Delay</span><svg class="ico" style="left:283px;top:-15.2px;overflow:visible" width="32" height="32" viewBox="0 0 32 32"><circle cx="16" cy="16" r="15.6" fill="#ffffff" stroke="#111" stroke-width="1.3"/><path d="M15.3,5.2 V16.6 H23" stroke="#3a3a3a" stroke-width="1.7" fill="none"/></svg><svg class="pin" style="left:16.3px;top:45.8px" width="16" height="19" viewBox="0 0 16 19"><path d="M1.6,0.4 L7.6,0.4 Q8.6,0.4 9.3,1.2 L15.4,8.7 Q16,9.5 15.4,10.3 L9.3,17.8 Q8.6,18.6 7.6,18.6 L1.6,18.6 Q0.4,18.6 0.4,17.4 L0.4,1.6 Q0.4,0.4 1.6,0.4 Z" fill="#f2f2f2"/></svg><span class="t " style="top:47.53px;font-size:15.8px;color:#ececec;right:39.6px;">Completed</span><svg class="pin" style="left:268.8px;top:45.8px" width="16" height="19" viewBox="0 0 16 19"><path d="M1.6,0.4 L7.6,0.4 Q8.6,0.4 9.3,1.2 L15.4,8.7 Q16,9.5 15.4,10.3 L9.3,17.8 Q8.6,18.6 7.6,18.6 L1.6,18.6 Q0.4,18.6 0.4,17.4 L0.4,1.6 Q0.4,0.4 1.6,0.4 Z" fill="#f2f2f2"/></svg><svg class="pin" style="left:16.3px;top:90px" width="20" height="18" viewBox="0 0 20 18"><circle cx="7.3" cy="9" r="5.9" fill="rgba(0,0,0,0.6)" stroke="#3ec41c" stroke-width="2.7"/><path d="M15,5.2 L19,9 L15,12.8 Z" fill="#3ec41c"/></svg><span class="t " style="top:91.23px;font-size:15.8px;color:#ececec;left:42.5px;">Duration</span><div class="vbox" style="left:111px;top:86.7px;width:27.8px;height:20.8px;font-size:18px;line-height:20.8px">5.0</div></div></div><svg class="sel" style="left:1776.9px;top:756.7px" width="304.9" height="132.8"><rect x="2.4" y="2.4" width="300.1" height="128" rx="11" fill="none" stroke="url(#selg)" stroke-width="4.4"/></svg><div class="node" style="left:1781.4px;top:761.2px;width:295.9px;height:123.8px;border-radius:8px;background:rgba(10,13,10,0.80);border-width:3.5px;border-color:rgba(52,36,8,0.95);"><div class="hdr" style="height:28.1px;background:linear-gradient(180deg, rgba(255,255,255,0.35) 0px, rgba(255,255,255,0.1) 3px, rgba(255,255,255,0) 7px),radial-gradient(ellipse 62% 50% at 50% 58%, rgba(0,0,0,0.55) 0%, rgba(0,0,0,0.3) 55%, rgba(0,0,0,0) 100%),linear-gradient(180deg, #a4a4a4 0%, #8a8a8a 35%, #6e6e6e 70%, #747474 100%);border-radius:5px 5px 0 0"></div><div class="hl" style="border-radius:6px 6px 0 0"></div><div class="kids" style="left:-2px;top:-2px;right:auto;bottom:auto;width:293.9px;height:121.3px"><span class="t qico" style="left:16.6px;top:4.8px">?</span><span class="t b" style="top:6.99px;font-size:18.2px;color:#d4d4d4;left:38.7px;transform:scaleX(0.9);transform-origin:0 0;">Is Valid</span><svg class="pin" style="left:16.9px;top:46.4px" width="16" height="19" viewBox="0 0 16 19"><path d="M1.6,0.4 L7.6,0.4 Q8.6,0.4 9.3,1.2 L15.4,8.7 Q16,9.5 15.4,10.3 L9.3,17.8 Q8.6,18.6 7.6,18.6 L1.6,18.6 Q0.4,18.6 0.4,17.4 L0.4,1.6 Q0.4,0.4 1.6,0.4 Z" fill="#f2f2f2"/></svg><span class="t " style="top:48.13px;font-size:15.8px;color:#ececec;left:39.2px;">Exec</span><span class="t " style="top:48.13px;font-size:15.8px;color:#ececec;right:40.5px;">Is Valid</span><svg class="pin" style="left:261.1px;top:46.4px" width="16" height="19" viewBox="0 0 16 19"><path d="M1.6,0.4 L7.6,0.4 Q8.6,0.4 9.3,1.2 L15.4,8.7 Q16,9.5 15.4,10.3 L9.3,17.8 Q8.6,18.6 7.6,18.6 L1.6,18.6 Q0.4,18.6 0.4,17.4 L0.4,1.6 Q0.4,0.4 1.6,0.4 Z" fill="#f2f2f2"/></svg><svg class="pin" style="left:17.1px;top:87.9px" width="20" height="18" viewBox="0 0 20 18"><circle cx="7.3" cy="9" r="7.2" fill="#00a9f4"/><path d="M15,5.2 L19,9 L15,12.8 Z" fill="#00a9f4"/></svg><span class="t " style="top:89.13px;font-size:15.8px;color:#ececec;left:43.7px;">Input Object</span><span class="t " style="top:89.13px;font-size:15.8px;color:#ececec;right:40.5px;">Is Not Valid</span><svg class="pin" style="left:261.1px;top:87.4px" width="16" height="19" viewBox="0 0 16 19"><path d="M1.4,1.2 L7.9,1.2 L14.8,9.5 L7.9,17.8 L1.4,17.8 Z" fill="none" stroke="#e6e6e6" stroke-width="1.9" stroke-linejoin="round"/></svg></div></div><svg class="sel" style="left:2092.4px;top:736.4px" width="283" height="153.1"><rect x="2.4" y="2.4" width="278.2" height="148.3" rx="11" fill="none" stroke="url(#selg)" stroke-width="4.4"/></svg><div class="node" style="left:2096.9px;top:740.9px;width:274px;height:144.1px;border-radius:8px;background:rgba(10,13,10,0.80);border-width:3.5px;border-color:rgba(52,36,8,0.95);"><div class="hdr" style="height:50.1px;background:linear-gradient(180deg, rgba(255,255,255,0.28) 0px, rgba(255,255,255,0.08) 3px, rgba(255,255,255,0) 7px),linear-gradient(180deg, rgba(255,255,255,0.10) 0%, rgba(255,255,255,0) 40%),radial-gradient(ellipse 55% 50% at 42% 60%, rgba(0,0,0,0.6) 0%, rgba(0,0,0,0.35) 55%, rgba(0,0,0,0) 100%),linear-gradient(100deg, #5f8eb0 0%, #4e7a9a 40%, #2e4250 78%, #262e34 100%);border-radius:5px 5px 0 0"></div><div class="hl" style="border-radius:6px 6px 0 0"></div><div class="kids" style="left:-2px;top:-2px;right:auto;bottom:auto;width:272px;height:141.6px"><svg class="ico" style="left:13.6px;top:7.8px" width="16" height="18" viewBox="0 0 16 18"><path d="M14.6,2.2 C14,0.6 11.4,0.4 10.2,2.8 C9.2,5 7.4,11.5 6.3,14.2 C5.3,16.8 2.6,17.4 1.4,15.6 M4.2,5.6 H14.6" stroke="#7cc4ff" stroke-width="1.6" fill="none" stroke-linecap="round"/><circle cx="14.3" cy="2" r="1.3" fill="#7cc4ff"/><circle cx="1.8" cy="15.6" r="1.4" fill="#7cc4ff"/></svg><span class="t b" style="top:6.19px;font-size:18.2px;color:#d4d4d4;left:38px;transform:scaleX(0.9);transform-origin:0 0;">Destroy Component</span><span class="t i" style="top:31.41px;font-size:15.7px;color:#a9b68a;left:38px;">Target is Actor Component</span><svg class="pin" style="left:16.4px;top:68.7px" width="16" height="19" viewBox="0 0 16 19"><path d="M1.6,0.4 L7.6,0.4 Q8.6,0.4 9.3,1.2 L15.4,8.7 Q16,9.5 15.4,10.3 L9.3,17.8 Q8.6,18.6 7.6,18.6 L1.6,18.6 Q0.4,18.6 0.4,17.4 L0.4,1.6 Q0.4,0.4 1.6,0.4 Z" fill="#f2f2f2"/></svg><svg class="pin" style="left:238px;top:68.7px" width="16" height="19" viewBox="0 0 16 19"><path d="M1.4,1.2 L7.9,1.2 L14.8,9.5 L7.9,17.8 L1.4,17.8 Z" fill="none" stroke="#e6e6e6" stroke-width="1.9" stroke-linejoin="round"/></svg><svg class="pin" style="left:16.4px;top:110.2px" width="20" height="18" viewBox="0 0 20 18"><circle cx="7.3" cy="9" r="7.2" fill="#00a9f4"/><path d="M15,5.2 L19,9 L15,12.8 Z" fill="#00a9f4"/></svg><span class="t " style="top:111.43px;font-size:15.8px;color:#ececec;left:43px;">Target</span></div></div><svg class="sel" style="left:1819px;top:886.7px" width="214.3" height="54.9"><rect x="2.4" y="2.4" width="209.5" height="50.1" rx="26" fill="none" stroke="url(#selg)" stroke-width="4.4"/></svg><div class="node" style="left:1823.5px;top:891.2px;width:205.3px;height:45.9px;border-radius:23px;background:rgba(44,47,49,0.88);border-width:3.5px;border-color:rgba(52,36,8,0.95);"><div class="kids" style="left:-2px;top:-2px;right:auto;bottom:auto;width:203.3px;height:43.4px"><div class="varhdr" style="border-radius:22px"></div><span class="t " style="top:12.73px;font-size:15.8px;color:#ececec;left:25.7px;">Eject Casing Comp</span><svg class="pin" style="left:164.1px;top:11.3px" width="20" height="18" viewBox="0 0 20 18"><circle cx="7.3" cy="9" r="7.2" fill="#00a9f4"/><path d="M15,5.2 L19,9 L15,12.8 Z" fill="#00a9f4"/></svg></div></div><div class="node" style="left:2726.4px;top:615.6px;width:73.6px;height:38px;border-radius:7px;background:rgba(10,13,10,0.80);border-width:2px;"><div class="hdr" style="height:28.4px;background:linear-gradient(180deg,#5f88a8 0%,#3e5e78 100%);border-radius:5px 5px 0 0"></div><div class="hl" style="border-radius:6px 6px 0 0"></div><div class="kids" style="left:-2px;top:-2px;right:auto;bottom:auto;width:73.6px;height:38px"><div style="position:absolute;left:12.6px;top:4px;width:4px;height:22px;background:#d8d8d8"></div></div></div>
<svg class="pin" style="left:1755.5px;top:324.5px" width="26" height="18" viewBox="0 0 26 18"><circle cx="9" cy="9" r="8" fill="#f2f2f2"/><path d="M16.5,5 L21,9 L16.5,13 Z" fill="#f2f2f2"/></svg><svg class="pin" style="left:2133.5px;top:324.5px" width="26" height="18" viewBox="0 0 26 18"><circle cx="9" cy="9" r="8" fill="#f2f2f2"/><path d="M16.5,5 L21,9 L16.5,13 Z" fill="#f2f2f2"/></svg>
<div id="tbwrap"><div id="rvig"></div><div id="tb"></div><div id="tbline"></div><div id="lstrip"></div>
<svg class="ico" style="left:14px;top:16px" width="22" height="28" viewBox="0 0 22 28">
 <path d="M2,2 H14 V5.5 H7.5 V17 L2,21.5 Z" fill="#6c6c6c"/><path d="M7.5,5.5 H19 V26 L13.2,20.5 L7.5,26 Z" fill="#c2c2c2"/></svg>
<svg class="ico" style="left:44px;top:25px" width="15" height="10" viewBox="0 0 15 10"><path d="M1.5,1.5 L7.5,7.5 L13.5,1.5" stroke="#b0b0b0" stroke-width="2" fill="none"/></svg>
<div class="sep" style="left:73.2px"></div>
<svg class="ico" style="left:88px;top:17px" width="30" height="24" viewBox="0 0 30 24"><path d="M0,12 L12,0.5 V7.5 H28.5 V16.5 H12 V23.5 Z" fill="#ffffff"/></svg>
<svg class="ico" style="left:147px;top:17px" width="30" height="24" viewBox="0 0 30 24"><path d="M30,12 L18,0.5 V7.5 H1.5 V16.5 H18 V23.5 Z" fill="#8c8c8c"/></svg>
<div class="sep" style="left:191px"></div>
<svg class="ico" style="left:212px;top:15px" width="34" height="30" viewBox="0 0 34 30">
 <rect x="1" y="1" width="12" height="11" rx="2.5" fill="#c4c4c4"/><rect x="23" y="3.5" width="10" height="7" rx="2" fill="#c4c4c4"/>
 <rect x="3" y="22" width="9" height="7" rx="2" fill="#c4c4c4"/><rect x="21" y="20" width="11" height="8" rx="2" fill="#c4c4c4"/>
 <path d="M7,12 V22 M13,7 H23 M11,10 L22,21" stroke="#c4c4c4" stroke-width="2" fill="none"/></svg>
<span class="t bc" style="top:16.19px;font-size:27.3px;left:269px;">BP_MasterRangeWeapon</span><svg class="ico" style="left:597px;top:19px" width="16" height="22" viewBox="0 0 16 22"><path d="M3,2 L12.5,11 L3,20" stroke="#b8b8b8" stroke-width="3" fill="none"/></svg><span class="t bc" style="top:16.7px;font-size:26.7px;left:626.5px;">Event Graph</span><svg class="ico" style="left:808px;top:19px" width="16" height="22" viewBox="0 0 16 22"><path d="M3,2 L12.5,11 L3,20" stroke="#b8b8b8" stroke-width="3" fill="none"/></svg><span class="t bc" style="top:15.6px;font-size:28px;left:848.6px;">Mics</span><span class="t b" style="top:13.26px;font-size:31px;color:#2b2b2b;left:2631px;transform:scaleX(0.84);transform-origin:0 0;">Zoom -1</span></div>
</body></html>
